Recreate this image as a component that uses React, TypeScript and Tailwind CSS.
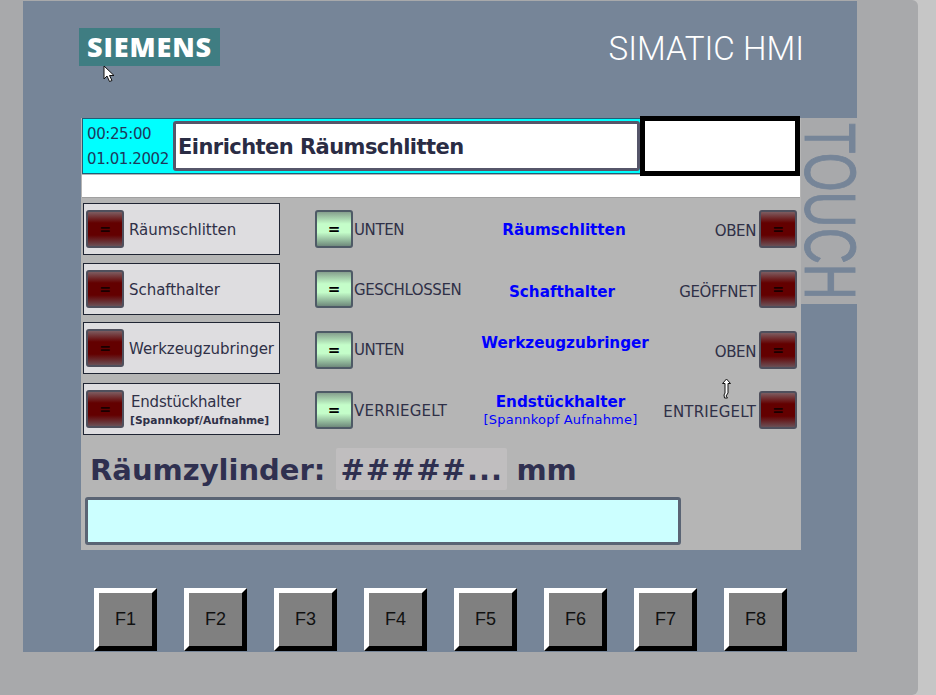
import React from "react"

const rows = [
    { name: "Räumschlitten", state: "UNTEN", right: "OBEN", rowClass: "mt-[5px]", shift: "", labelClass: "mt-[2px]", textClass: "tracking-[-0.4px] mt-[2px]", rightClass: "tracking-[-0.4px] mt-[5px]", centerClass: "mt-[2px]" },
    { name: "Schafthalter", state: "GESCHLOSSEN", right: "GEÖFFNET", rowClass: "mt-[8px]", shift: "", labelClass: "mt-[2px]", textClass: "tracking-[-0.4px] mt-[2px]", rightClass: "tracking-[-0.4px] mt-[6px]", centerClass: "mt-[5px] pr-[4px]" },
    { name: "Werkzeugzubringer", state: "UNTEN", right: "OBEN", rowClass: "mt-[7px]", shift: "mt-[4px]", labelClass: "mt-[3px]", textClass: "tracking-[-0.4px] mt-[5px]", rightClass: "tracking-[-0.4px] mt-[5px]", centerClass: "-mt-[10px] pl-[2px]" },
    { name: "Endstückhalter", sub: "[Spannkopf/Aufnahme]", center2: "[Spannkopf Aufnahme]", state: "VERRIEGELT", right: "ENTRIEGELT", rowClass: "mt-[9px]", shift: "mt-[2px]", labelClass: "", textClass: "tracking-[0.2px] mt-[4px]", rightClass: "tracking-[0.2px] mt-[4px]", centerClass: "mt-0 pr-[7px]" },
]

const fKeys = ["F1", "F2", "F3", "F4", "F5", "F6", "F7", "F8"]

function RedButton({ className = "" }: { className?: string }) {
    return (
        <div className={`w-[38px] h-[38px] shrink-0 flex items-center justify-center rounded-[3px] border-2 border-[#4f4f5c] bg-[linear-gradient(to_bottom,#7d5c60,#630000_32%,#630000_68%,#6a4f55)] font-['DejaVu_Sans'] font-bold text-[14px] text-[#1a0000] ${className}`}>
            =
        </div>
    )
}

function GreenButton({ className = "" }: { className?: string }) {
    return (
        <div className={`w-[38px] h-[38px] shrink-0 flex items-center justify-center rounded-[3px] border-2 border-[#4e5a66] bg-[linear-gradient(to_bottom,#86a08e,#c4fdc9_35%,#c4fdc9_60%,#6f8a7c)] font-['DejaVu_Sans'] font-bold text-[15px] text-black ${className}`}>
            =
        </div>
    )
}

export default function App() {
    return (
        <div className="relative w-[936px] h-[695px] overflow-hidden bg-[#c6c6c6] font-['DejaVu_Sans',sans-serif]">
            {/* Device housing */}
            <div className="w-[918px] h-[695px] pt-px pl-[23px] bg-[#a8a9ab] rounded-r-md">
                <div className="flex flex-col w-[834px] h-[651px] bg-[#768598]">
                    {/* Logo bar */}
                    <div className="flex items-start justify-between h-[117px] pt-[27px] pl-[56px] pr-[53px]">
                        <div className="flex items-center justify-center w-[141px] h-[38px] bg-[#3f7d82] font-['Open_Sans'] font-extrabold text-[27px] tracking-[0.9px] text-white">
                            SIEMENS
                        </div>
                        <div className="mt-[1px] font-['Roboto'] font-light text-[33.2px] leading-[40px] text-white whitespace-nowrap">
                            SIMATIC HMI
                        </div>
                    </div>

                    <div className="flex items-start">
                        {/* Screen */}
                        <div className="ml-[58px] w-[720px] h-[432px] shrink-0 bg-[#b5b5b5]">
                            <div className="flex items-center h-[56px] ml-px w-[718px] bg-[#00ffff] border border-[#1f5f77]">
                                <div className="w-[90px] shrink-0 pt-[2px] pl-[4px] text-[15px] leading-[25px] text-[#1d3a5c] tracking-[-0.4px]">
                                    <div>00:25:00</div>
                                    <div>01.01.2002</div>
                                </div>
                                <div className="flex items-center w-[467px] shrink-0 h-[50px] pl-[2px] pt-[4px] bg-white border-[3px] border-[#56566a] rounded-[3px] font-bold text-[21px] tracking-[-0.55px] text-[#2a2c44] whitespace-nowrap">
                                    Einrichten Räumschlitten
                                </div>
                                <div className="relative w-[160px] shrink-0 h-[60px] -my-[2px] bg-white border-[5px] border-black"></div>
                            </div>
                            <div className="h-[23px] ml-px w-[718px] mt-px bg-white border-b border-[#a0a0a0]"></div>

                            {rows.map((row) => (
                                <div key={row.state + row.name} className={`flex items-center h-[52px] ${row.rowClass}`}>
                                    <div className="flex items-center ml-[2px] w-[197px] h-[52px] shrink-0 pl-[2px] bg-[#dedde0] border border-[#1f2433]">
                                        <RedButton />
                                        {row.sub ? (
                                            <div className="ml-[6px] text-[#2f3047] whitespace-nowrap">
                                                <div className="ml-[1px] text-[15px] tracking-[-0.2px] leading-[22px]">{row.name}</div>
                                                <div className="font-bold text-[10.7px] leading-[14px] mt-[1px]">{row.sub}</div>
                                            </div>
                                        ) : (
                                            <div className={`ml-[5px] text-[15px] tracking-[-0.05px] text-[#2f3047] whitespace-nowrap ${row.labelClass}`}>{row.name}</div>
                                        )}
                                    </div>
                                    <GreenButton className={`ml-[35px] ${row.shift}`} />
                                    <div className={`ml-px w-[110px] shrink-0 text-[15px] text-[#2f3047] whitespace-nowrap ${row.textClass}`}>
                                        {row.state}
                                    </div>
                                    <div className={`w-[200px] shrink-0 text-center whitespace-nowrap ${row.centerClass}`}>
                                        <div className="font-bold text-[15.2px] leading-[20px] text-[#0000ff]">{row.name}</div>
                                        {row.center2 && (
                                            <div className="text-[13px] leading-[15px] tracking-[0.2px] text-[#0000ff]">{row.center2}</div>
                                        )}
                                    </div>
                                    <div className={`flex w-[137px] shrink-0 items-center justify-end pr-[4px] ${row.shift}`}>
                                        <span className={`mr-[3px] text-[15px] text-[#2f3047] whitespace-nowrap ${row.rightClass}`}>{row.right}</span>
                                        <RedButton />
                                    </div>
                                </div>
                            ))}

                            {/* Räumzylinder value */}
                            <div className="flex items-center h-[42px] mt-[13px] ml-[9px] font-bold text-[29px] text-[#2f3050] whitespace-nowrap">
                                <span className="mt-[3px]">Räumzylinder:</span>
                                <div className="ml-[11px] w-[171px] h-[42px] flex items-center pl-[4px] pt-[3px] bg-[#c0bebf] rounded-[2px] tracking-[1px] overflow-hidden">
                                    #####...
                                </div>
                                <span className="ml-[9px] mt-[3px]">mm</span>
                            </div>

                            {/* Message line */}
                            <div className="ml-[4px] mt-[7px] w-[596px] h-[48px] bg-[#ccffff] border-[3px] border-[#5a6474] rounded-[3px]"></div>
                        </div>

                        {/* TOUCH strip */}
                        <div className="flex justify-center w-[56px] h-[186px] bg-[#a8a9ab]">
                            <div className="h-[186px] w-[56px] flex items-center justify-center [writing-mode:vertical-rl] scale-x-[1.44] font-['Liberation_Sans'] text-[50px] leading-[38px] text-[#768598] [-webkit-text-stroke:0.6px_#768598]">
                                TOUCH
                            </div>
                        </div>
                    </div>

                    {/* Function keys */}
                    <div className="flex gap-[27px] pl-[71px] mt-[38px]">
                        {fKeys.map((key) => (
                            <div
                                key={key}
                                className="flex items-center justify-center w-[63px] h-[63px] bg-[#808080] border-[5px] border-t-white border-l-white border-r-black border-b-black font-['Liberation_Sans'] text-[18px] text-[#111]"
                            >
                                {key}
                            </div>
                        ))}
                    </div>
                </div>
            </div>

            {/* Mouse cursors in the capture */}
            <svg className="absolute left-[103px] top-[65px]" width="13" height="18" viewBox="0 0 13 18">
                <path d="M1 1 L1 14 L4 11 L6.5 16.5 L9 15.5 L6.5 10.5 L11 10.5 Z" fill="#fff" stroke="#111" strokeWidth="1" />
            </svg>
            <svg className="absolute left-[721px] top-[378px]" width="11" height="22" viewBox="0 0 11 22">
                <path d="M5.5 1 L9.5 5.5 L7 5.5 L7 15 L5 18 L6.5 20 L3.5 20 L3 17 L4 15 L4 5.5 L1.5 5.5 Z" fill="#fff" stroke="#111" strokeWidth="1" />
            </svg>
        </div>
    )
}
